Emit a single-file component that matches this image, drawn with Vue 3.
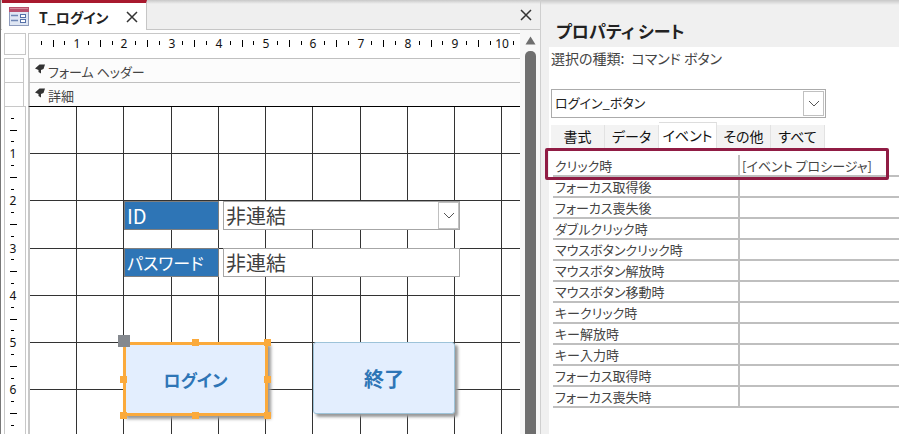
<script setup>
import { ref } from 'vue'

const PITCH = 47.25
const at = (n) => Math.round(n * PITCH - 0.1)
const verticals = Array.from({ length: 40 }, (_, i) => at(i + 1) - 1)
const horizontals = Array.from({ length: 30 }, (_, i) => at(i + 1) - 1)
const marksX = Array.from({ length: 11 }, (_, i) => i)
const marksY = Array.from({ length: 7 }, (_, i) => i)

const control = ref('ログイン_ボタン')
const source = ref('非連結')
const password = ref('非連結')
const tabs = ['書式', 'データ', 'イベント', 'その他', 'すべて']
const active = ref('イベント')
const events = [
  ['クリック時', '[イベント プロシージャ]'],
  ['フォーカス取得後', ''],
  ['フォーカス喪失後', ''],
  ['ダブルクリック時', ''],
  ['マウスボタンクリック時', ''],
  ['マウスボタン解放時', ''],
  ['マウスボタン移動時', ''],
  ['キークリック時', ''],
  ['キー解放時', ''],
  ['キー入力時', ''],
  ['フォーカス取得時', ''],
  ['フォーカス喪失時', ''],
]
const handles = ['n', 'ne', 'e', 'se', 's', 'sw', 'w']
</script>

<template>
  <div class="app">
    <main class="designer">
      <header class="tabbar">
        <div class="doc-tab">
          <svg class="form-icon" width="20" height="20" viewBox="0 0 20 20" aria-hidden="true">
            <rect x="0.5" y="1.5" width="19" height="17" fill="#dfe6f3" stroke="#8f9cbd" />
            <rect x="0" y="0" width="20" height="5" fill="#b9506c" />
            <rect x="1" y="1" width="18" height="1" fill="#d68a9c" />
            <path d="M2 8.500h7M2 13.500h7" stroke="#6f86b5" stroke-width="1.500" />
            <rect x="11.500" y="7.500" width="5" height="3" fill="#fff" stroke="#5570a8" />
            <rect x="11.500" y="12.500" width="5" height="3" fill="#fff" stroke="#5570a8" />
          </svg>
          <span class="doc-name">T_ログイン</span>
          <button class="close" aria-label="タブを閉じる">
            <svg width="12" height="12" viewBox="0 0 12 12"><path d="M1 1l10 10M11 1L1 11" /></svg>
          </button>
        </div>
        <button class="close" aria-label="閉じる">
          <svg width="12" height="12" viewBox="0 0 12 12"><path d="M1 1l10 10M11 1L1 11" /></svg>
        </button>
      </header>

      <div class="work">
        <div class="sheet">
          <div class="corner"></div>
          <div class="ruler-x">
            <svg width="100%" height="22">
              <g v-for="n in marksX" :key="n">
                <rect :x="at(n + 0.25)" y="7" width="1" height="4" />
                <rect :x="at(n + 0.5)" y="6" width="1" height="7" />
                <rect :x="at(n + 0.75)" y="7" width="1" height="4" />
                <text v-if="n" :x="at(n) + 1" y="14">{{ n }}</text>
              </g>
            </svg>
          </div>
          <div class="selector"></div>
          <div class="band">
            <svg width="10" height="10" viewBox="0 0 10 10"><path d="M4.500 0.500L10 0.500L8.500 5L6 6L6 9.500L3.500 8L3.500 6L0 4.500z" /></svg>
            <span>フォーム ヘッダー</span>
          </div>
          <div class="selector"></div>
          <div class="band">
            <svg width="10" height="10" viewBox="0 0 10 10"><path d="M4.500 0.500L10 0.500L8.500 5L6 6L6 9.500L3.500 8L3.500 6L0 4.500z" /></svg>
            <span>詳細</span>
          </div>
          <div class="ruler-y">
            <svg width="21" height="100%">
              <g v-for="n in marksY" :key="n">
                <rect x="6" :y="at(n + 0.25) - 1" width="3" height="1" />
                <rect x="5" :y="at(n + 0.5) - 1" width="7" height="1" />
                <rect x="6" :y="at(n + 0.75) - 1" width="3" height="1" />
                <text v-if="n" x="8" :y="at(n) + 4">{{ n }}</text>
              </g>
            </svg>
          </div>
          <div class="canvas">
            <svg class="grid" width="100%" height="100%" aria-hidden="true">
              <rect v-for="x in verticals" :key="'v' + x" :x="x" y="0" width="1" height="100%" />
              <rect v-for="y in horizontals" :key="'h' + y" x="0" :y="y" width="100%" height="1" />
            </svg>
            <label class="field-label id-label" for="user-id">ID</label>
            <div class="field id-field">
              <select id="user-id" v-model="source"><option>非連結</option></select>
              <span class="drop"><svg width="12" height="7" viewBox="0 0 12 7"><path d="M1 1l5 5 5-5" /></svg></span>
            </div>
            <label class="field-label pw-label" for="user-pw">パスワード</label>
            <input id="user-pw" v-model="password" class="field pw-field" type="text" />
            <button class="cmd login">
              ログイン
              <i class="origin"></i>
              <i v-for="h in handles" :key="h" class="handle" :class="h"></i>
            </button>
            <button class="cmd quit">終了</button>
          </div>
        </div>
        <div class="scrollbar">
          <svg width="11" height="9" viewBox="0 0 11 9"><path d="M5.500 0.500L10.500 8.500H0.500z" /></svg>
          <div class="thumb"></div>
        </div>
      </div>
    </main>

    <aside class="props">
      <h1>プロパティ シート</h1>
      <div class="panel">
        <label class="kind" for="control">選択の種類:&ensp;コマンド ボタン</label>
        <div class="combo">
          <select id="control" v-model="control"><option>ログイン_ボタン</option></select>
          <span class="drop"><svg width="12" height="7" viewBox="0 0 12 7"><path d="M1 1l5 5 5-5" /></svg></span>
        </div>
        <nav class="tabs">
          <button v-for="t in tabs" :key="t" :class="{ on: t === active }" @click="active = t">{{ t }}</button>
        </nav>
        <div class="list">
          <table>
            <tbody>
              <tr v-for="[name, value] in events" :key="name">
                <th scope="row">{{ name }}</th>
                <td>{{ value }}</td>
              </tr>
            </tbody>
          </table>
          <div class="callout"></div>
        </div>
      </div>
    </aside>
  </div>
</template>

<style>
body {
  margin: 0;
}
</style>

<style scoped>
.app {
  display: grid;
  grid-template-columns: 541fr 358fr;
  height: 100vh;
  overflow: hidden;
  background: #f0f0f0;
  color: #444;
  font-family: "Noto Sans CJK JP", sans-serif;
  font-size: 13px;
  font-feature-settings: "palt";
}
.app * {
  box-sizing: border-box;
}
button,
select,
input {
  margin: 0;
  padding: 0;
  border: 0;
  border-radius: 0;
  background: none;
  color: inherit;
  font: inherit;
  font-feature-settings: inherit;
}
select {
  appearance: none;
}
.designer {
  display: flex;
  flex-direction: column;
  min-width: 0;
  border-left: 1px solid #777;
  border-right: 1px solid #cfcfcf;
  background: #fff;
}
.tabbar {
  display: flex;
  flex: none;
  justify-content: space-between;
  height: 30px;
  padding: 0 8px 0 1px;
  border-bottom: 1px solid #c6c6c6;
  background: linear-gradient(#c8c8c8, #efefef 4px);
}
.doc-tab {
  display: flex;
  align-items: center;
  height: 30px;
  padding: 0 8px 0 7px;
  border-top: 3px solid #a8192e;
  border-right: 1px solid #c6c6c6;
  background: #fff;
}
.form-icon {
  flex: none;
}
.doc-name {
  width: 97px;
  padding-left: 10px;
  color: #222;
  font-size: 14px;
  font-weight: 700;
  line-height: 24px;
  white-space: nowrap;
}
.close {
  display: flex;
  align-items: center;
  justify-content: center;
  width: 12px;
}
.close path {
  fill: none;
  stroke: #333;
  stroke-width: 1.5;
}
.work {
  display: flex;
  flex: 1;
  min-height: 0;
}
.sheet {
  display: grid;
  flex: 1;
  grid-template-columns: 22px 1fr;
  grid-template-rows: 25px 24px 24px 1fr;
  column-gap: 2px;
  min-width: 0;
  padding: 3px 0 0 3px;
}
.corner {
  height: 22px;
  border: 1px solid #c8c8c8;
}
.ruler-x {
  overflow: hidden;
  border-top: 1px solid #c8c8c8;
  border-left: 1px solid #c8c8c8;
}
.ruler-x text,
.ruler-y text {
  fill: #111;
  font-family: "Noto Sans", sans-serif;
  font-size: 12px;
  text-anchor: middle;
}
.selector {
  margin-right: 2px;
  border: 1px solid #c8c8c8;
  border-bottom-width: 0;
}
.band {
  display: flex;
  align-items: flex-start;
  gap: 3px;
  padding: 0 5px;
  border-top: 1px solid #c0c0c0;
  border-left: 2px solid #c8c8c8;
  background: #fcfcfc;
  line-height: 26px;
  white-space: nowrap;
}
.band svg {
  margin-top: 5px;
  fill: #333;
}
.ruler-y {
  min-height: 0;
  overflow: hidden;
  border: 1px solid #c8c8c8;
  border-bottom: 0;
}
.ruler-y svg {
  display: block;
}
.canvas {
  position: relative;
  min-height: 0;
  overflow: hidden;
  border-top: 1px solid #000;
  border-left: 2px solid #c8c8c8;
}
.grid {
  display: block;
  fill: #333;
}
.field-label,
.field {
  position: absolute;
  height: 29px;
  font-size: 20px;
  line-height: 27px;
  white-space: nowrap;
}
.field-label {
  left: 94px;
  width: 95px;
  padding-left: 2px;
  border: 1px solid #7f7f7f;
  background: #2e75b6;
  color: #fff;
}
.field {
  left: 193px;
  width: 237px;
  border: 1px solid #a6a6a6;
  background: #fff;
  color: #404040;
}
.id-label,
.id-field {
  top: 94px;
}
.pw-label,
.pw-field {
  top: 141px;
}
.pw-label {
  font-size: 17px;
}
.pw-field {
  padding: 0 2px;
}
.id-field {
  display: flex;
}
.field select {
  flex: 1;
  padding: 0 2px;
  line-height: 27px;
}
.drop {
  display: flex;
  align-items: center;
  justify-content: center;
  width: 21px;
  border: 1px solid #c0c0c0;
  background: #fff;
  pointer-events: none;
}
.drop path {
  fill: none;
  stroke: #555;
}
.cmd {
  position: absolute;
  top: 235px;
  width: 142px;
  height: 72px;
  border: 1px solid #9dc3d9;
  border-radius: 3px;
  background: #e3eefe;
  box-shadow: 3px 3px 3px #999;
  color: #2e75b6;
  font-size: 20px;
  font-weight: 700;
}
.quit {
  left: 283px;
}
.login {
  left: 93px;
  width: 145px;
  height: 74px;
  border: 3px solid #fbaa3c;
  border-radius: 0;
  font-size: 17px;
}
.handle,
.origin {
  position: absolute;
  width: 7px;
  height: 7px;
  background: #fbaa3c;
}
.origin {
  top: -10px;
  left: -8px;
  width: 12px;
  height: 12px;
  background: #85898f;
}
.n { top: -6px; left: 66px; }
.ne { top: -6px; right: -6px; }
.e { top: 31px; right: -6px; }
.se { right: -6px; bottom: -6px; }
.s { bottom: -6px; left: 66px; }
.sw { bottom: -6px; left: -6px; }
.w { top: 31px; left: -6px; }
.scrollbar {
  display: flex;
  flex-direction: column;
  align-items: center;
  gap: 6px;
  width: 20px;
  padding-top: 6px;
  background: #f7f7f7;
}
.scrollbar svg {
  flex: none;
  fill: #6e6e6e;
}
.thumb {
  flex: 1;
  width: 11px;
  border-radius: 5px 5px 0 0;
  background: #6e6e6e;
}
.props {
  display: flex;
  flex-direction: column;
  min-width: 0;
  padding-left: 8px;
  background: linear-gradient(#c8c8c8, #f0f0f0 5px);
}
h1 {
  margin: 0;
  padding: 15px 0 0 7px;
  color: #222;
  font-size: 17px;
  font-weight: 700;
  line-height: 32px;
}
.panel {
  flex: 1;
  padding-left: 2px;
  background: #fff;
}
.kind {
  display: block;
  height: 42px;
  font-size: 14px;
  line-height: 22px;
}
.combo {
  display: flex;
  width: 275px;
  height: 29px;
  padding: 1px;
  border: 1px solid #ababab;
  color: #222;
}
.combo select {
  flex: 1;
  padding: 0 0 2px 2px;
}
.tabs {
  display: flex;
  align-items: flex-end;
  height: 30px;
  color: #111;
}
.tabs button {
  width: 54px;
  height: 23px;
  border-right: 1px solid #e2e2e2;
  background: #f3f3f3;
  font-size: 14px;
  line-height: 23px;
  white-space: nowrap;
}
.tabs .on {
  width: 58px;
  height: 26px;
  border-top: 1px solid #ddd;
  background: #fff;
}
.list {
  position: relative;
  padding: 7px 0 0 2px;
}
table {
  width: 100%;
  border-collapse: collapse;
  table-layout: fixed;
}
th,
td {
  height: 21px;
  padding: 0 2px;
  border-bottom: 2px solid #bfbfbf;
  font-weight: 400;
  line-height: 19px;
  text-align: left;
  white-space: nowrap;
}
th {
  width: 186px;
  border-right: 2px solid #bfbfbf;
}
.callout {
  position: absolute;
  top: 0;
  right: 10px;
  left: -6px;
  height: 32px;
  border: 3px solid #901c44;
  border-radius: 2px;
  pointer-events: none;
}
</style>
